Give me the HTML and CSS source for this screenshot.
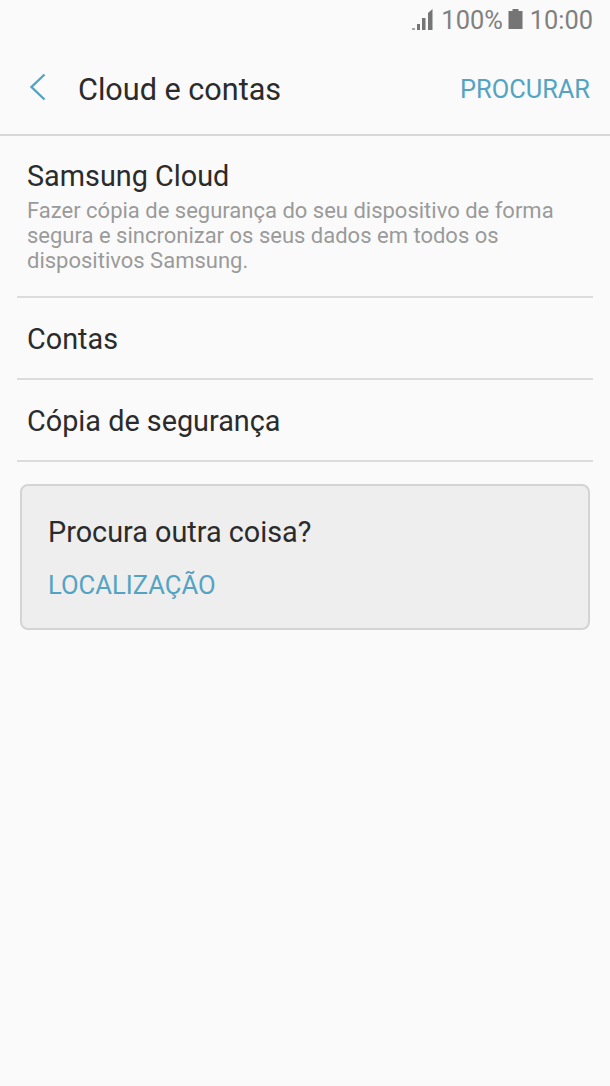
FILE: index.html
```html
<!DOCTYPE html>
<html lang="pt">
<head>
<meta charset="utf-8">
<title>Cloud e contas</title>
<link rel="stylesheet" href="styles.css">
</head>
<body>
<div class="status">
  <svg class="signal" width="22" height="22" viewBox="0 0 22 22">
    <rect class="dim" x="0" y="19" width="3" height="2"/>
    <rect x="5" y="15" width="3" height="6"/>
    <rect x="10" y="9" width="3.5" height="12"/>
    <path d="M16 4 L20.5 0 V21 H16 Z"/>
  </svg>
  <span class="pct">100%</span>
  <svg class="battery" width="15" height="22" viewBox="0 0 15 22">
    <path d="M4.5 0 H10.5 V2 H14.5 V20 H0.5 V2 H4.5 Z"/>
  </svg>
  <span class="time">10:00</span>
</div>
<header class="bar">
  <svg class="back" width="18" height="28" viewBox="0 0 18 28">
    <path d="M15.5 1.5 L2.5 14 L15.5 26.5"/>
  </svg>
  <h1 class="title">Cloud e contas</h1>
  <span class="action">PROCURAR</span>
</header>
<main>
  <ul class="list">
    <li class="row first">
      <div class="row-title">Samsung Cloud</div>
      <div class="row-sub">Fazer cópia de segurança do seu dispositivo de forma segura e sincronizar os seus dados em todos os dispositivos Samsung.</div>
    </li>
    <li class="row"><div class="row-title">Contas</div></li>
    <li class="row"><div class="row-title">Cópia de segurança</div></li>
  </ul>
  <section class="card">
    <div class="card-title">Procura outra coisa?</div>
    <div class="card-link">LOCALIZAÇÃO</div>
  </section>
</main>
</body>
</html>
```

FILE: styles.css
```css
* { box-sizing: border-box; }
html, body { margin: 0; padding: 0; }
body {
  width: 610px;
  height: 1086px;
  overflow: hidden;
  background: #fafafa;
  font-family: Roboto, "Liberation Sans", sans-serif;
  color: #2b2b2b;
}
.status {
  height: 40px;
  display: flex;
  align-items: center;
  justify-content: flex-end;
  padding-right: 17px;
  color: #808080;
  font-size: 25.4px;
  line-height: 40px;
}
.status svg { fill: #757575; flex: none; }
.status .dim { fill: #a5a5a5; }
.signal { margin-right: 7px; }
.battery { margin: 0 7px 0 5px; }
.bar {
  height: 96px;
  display: flex;
  align-items: center;
  padding: 4px 20px 0 29px;
  border-bottom: 2px solid #d8d8d8;
}
.back { fill: none; stroke: #54a3c3; stroke-width: 2.4; flex: none; margin-right: 31px; margin-top: -4px; }
.title { margin: 0; font-size: 30.6px; font-weight: 400; flex: 1; color: #2b2b2b; }
.action { font-size: 25.4px; color: #54a3c3; }
.list { list-style: none; margin: 0 17px; padding: 0; }
.row {
  height: 82px;
  padding: 2px 10px 0;
  display: flex;
  flex-direction: column;
  justify-content: center;
  border-bottom: 2px solid #dcdcdc;
}
.row.first { height: 162px; padding-top: 0; }
.row.first .row-title { margin-top: -1px; }
.row-title { font-size: 28.8px; line-height: 36px; }
.row-sub { font-size: 22px; line-height: 25px; color: #9a9a9a; margin-top: 4px; }
.card {
  margin: 22px 20px 0 20px;
  height: 146px;
  padding: 28px 26px 0;
  background: #eeeeee;
  border: 2px solid #d4d4d4;
  border-radius: 8px;
}
.card-title { font-size: 28.8px; line-height: 36px; }
.card-link { font-size: 25.6px; line-height: 30px; color: #54a3c3; margin-top: 20px; }
```
